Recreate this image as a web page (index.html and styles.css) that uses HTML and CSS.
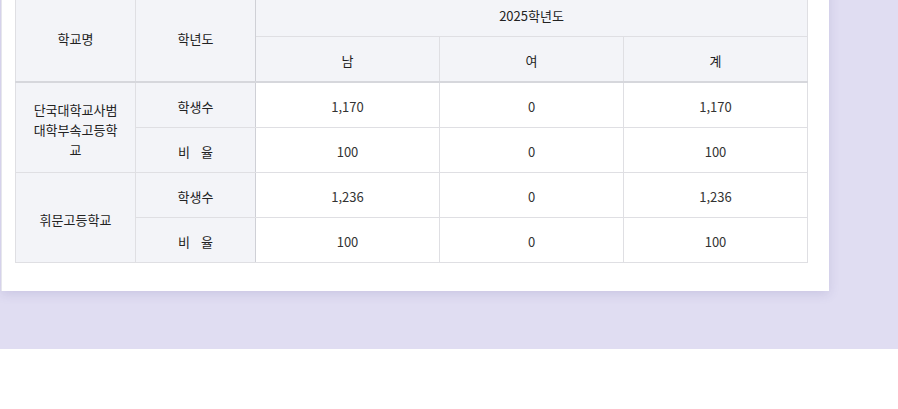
FILE: index.html
```html
<!DOCTYPE html>
<html lang="ko">
<head>
<meta charset="utf-8">
<link rel="stylesheet" href="styles.css">
</head>
<body>
<section class="band">
  <div class="card">
    <table class="stats">
      <thead>
        <tr class="h1">
          <th rowspan="2" class="side">학교명</th>
          <th rowspan="2" class="side split">학년도</th>
          <th colspan="3">2025학년도</th>
        </tr>
        <tr class="h2">
          <th>남</th>
          <th>여</th>
          <th>계</th>
        </tr>
      </thead>
      <tbody>
        <tr>
          <th rowspan="2" class="side school">단국대학교사범대학부속고등학교</th>
          <th class="side split">학생수</th>
          <td>1,170</td><td>0</td><td>1,170</td>
        </tr>
        <tr>
          <th class="side split">비&nbsp;&nbsp;&nbsp;율</th>
          <td>100</td><td>0</td><td>100</td>
        </tr>
        <tr>
          <th rowspan="2" class="side school">휘문고등학교</th>
          <th class="side split">학생수</th>
          <td>1,236</td><td>0</td><td>1,236</td>
        </tr>
        <tr>
          <th class="side split">비&nbsp;&nbsp;&nbsp;율</th>
          <td>100</td><td>0</td><td>100</td>
        </tr>
      </tbody>
    </table>
  </div>
</section>
</body>
</html>
```
FILE: styles.css
```css
html, body {
  margin: 0;
  padding: 0;
  background: #ffffff;
  font-family: "Noto Sans CJK KR", "Noto Sans", sans-serif;
  color: #333;
}
.band {
  background: #e0ddf2;
  height: 349px;
  overflow: hidden;
}
.card {
  margin-top: -40px;
  margin-left: 1px;
  width: 828px;
  box-sizing: border-box;
  background: #fff;
  padding: 31px 22px 28px 13px;
  box-shadow: 0 3px 10px rgba(90, 80, 150, 0.16);
  border-left: 1px solid #e6e6ec;
}
.stats {
  width: 793px;
  border-collapse: collapse;
  table-layout: fixed;
  font-size: 13px;
}
.stats th, .stats td {
  border: 1px solid #dfdfe3;
  text-align: center;
  vertical-align: middle;
  padding: 4px 10px 0;
  height: 40px;
  font-weight: 400;
  line-height: 20px;
}
.stats thead th {
  background: #f3f4f8;
  color: #222;
}
.stats thead tr.h2 th {
  border-bottom: 2px solid #d6d7dc;
}
.stats thead th.side {
  border-bottom: 2px solid #d6d7dc;
}
.stats tr.h1 th:nth-child(1),
.stats tr.h1 th:nth-child(2) { width: 99px; }
.stats th.side {
  background: #f3f4f8;
  color: #222;
}
.stats th.school {
  padding-left: 16px;
  padding-right: 16px;
}
.stats th.split {
  border-right: 1px solid #cfd0d6;
}
.stats td {
  color: #333;
  background: #fff;
}
```
